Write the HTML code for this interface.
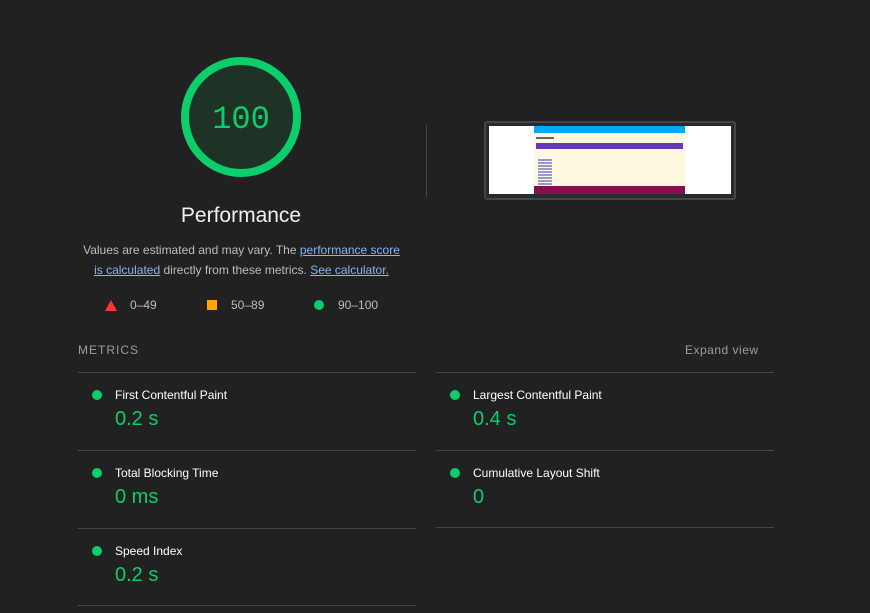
<!DOCTYPE html>
<html><head><style>
body{margin:0;width:870px;height:613px;background:#212121;font-family:"Liberation Sans",sans-serif;position:relative;overflow:hidden;color:#fff}
.a{position:absolute}
.rule{position:absolute;height:1px;background:#464646}
.dot{position:absolute;width:10px;height:10px;border-radius:50%;background:#0cce6b}
.t{position:absolute;font-size:12px;color:#fff}
.v{position:absolute;font-size:20px;color:#0cce6b}
a{color:#8ab4f8;text-decoration:underline}
</style></head><body>
<svg class="a" style="left:180px;top:56px" width="122" height="122"><circle cx="61" cy="61" r="56" fill="#1e3326" stroke="#0cce6b" stroke-width="8"/><text x="61" y="72" text-anchor="middle" font-family="Liberation Mono" font-size="32" fill="#0cce6b">100</text></svg>
<div class="a" style="left:131px;top:204px;width:220px;text-align:center;font-size:21px;color:#f0f0f0">Performance</div>
<div class="a" style="left:79px;top:240px;width:325px;text-align:center;font-size:12px;line-height:20px;color:#bdbdbd">Values are estimated and may vary. The <a>performance score is calculated</a> directly from these metrics. <a>See calculator.</a></div>
<svg class="a" style="left:105px;top:300px" width="12" height="11"><polygon points="6,0 12,11 0,11" fill="#f33"/></svg>
<div class="a" style="left:130px;top:298px;font-size:12px;color:#bdbdbd">0–49</div>
<div class="a" style="left:207px;top:300px;width:10px;height:10px;background:#ffa400"></div>
<div class="a" style="left:231px;top:298px;font-size:12px;color:#bdbdbd">50–89</div>
<div class="dot" style="left:314px;top:300px"></div>
<div class="a" style="left:338px;top:298px;font-size:12px;color:#bdbdbd">90–100</div>
<div class="a" style="left:426px;top:125px;width:1px;height:72px;background:#464646"></div>
<div class="a" style="left:484px;top:121px;width:248px;height:75px;border:2px solid #464646;border-radius:3px;background:#2a2a2a"></div>
<div class="a" style="left:489px;top:126px;width:242px;height:68px;background:#fff"></div>
<div class="a" style="left:534px;top:126px;width:151px;height:60px;background:#fff8e1"></div>
<div class="a" style="left:534px;top:126px;width:151px;height:7px;background:#03a9f4"></div>
<div class="a" style="left:536px;top:143px;width:147px;height:6px;background:#673ab7"></div>
<div class="a" style="left:536px;top:137px;width:18px;height:2px;background:#666"></div>
<div class="a" style="left:538px;top:158px;width:14px;height:28px;background:repeating-linear-gradient(#fff8e1 0 1px,#99c 1px 3px)"></div>
<div class="a" style="left:534px;top:186px;width:151px;height:8px;background:#880e4f"></div>
<div class="a" style="left:78px;top:343px;font-size:12px;letter-spacing:1px;color:#9e9e9e">METRICS</div>
<div class="a" style="left:685px;top:343px;font-size:12px;letter-spacing:.5px;color:#9e9e9e">Expand view</div>
<div class="rule" style="left:78px;top:372px;width:338px"></div>
<div class="rule" style="left:436px;top:372px;width:338px"></div>
<div class="rule" style="left:78px;top:450px;width:338px"></div>
<div class="rule" style="left:436px;top:450px;width:338px"></div>
<div class="rule" style="left:78px;top:528px;width:338px"></div>
<div class="rule" style="left:436px;top:527px;width:338px"></div>
<div class="rule" style="left:78px;top:605px;width:338px"></div>
<div class="dot" style="left:92px;top:390px"></div><div class="t" style="left:115px;top:388px">First Contentful Paint</div><div class="v" style="left:115px;top:408px">0.2 s</div>
<div class="dot" style="left:450px;top:390px"></div><div class="t" style="left:473px;top:388px">Largest Contentful Paint</div><div class="v" style="left:473px;top:408px">0.4 s</div>
<div class="dot" style="left:92px;top:468px"></div><div class="t" style="left:115px;top:466px">Total Blocking Time</div><div class="v" style="left:115px;top:486px">0 ms</div>
<div class="dot" style="left:450px;top:468px"></div><div class="t" style="left:473px;top:466px">Cumulative Layout Shift</div><div class="v" style="left:473px;top:486px">0</div>
<div class="dot" style="left:92px;top:546px"></div><div class="t" style="left:115px;top:544px">Speed Index</div><div class="v" style="left:115px;top:564px">0.2 s</div>
</body></html>
